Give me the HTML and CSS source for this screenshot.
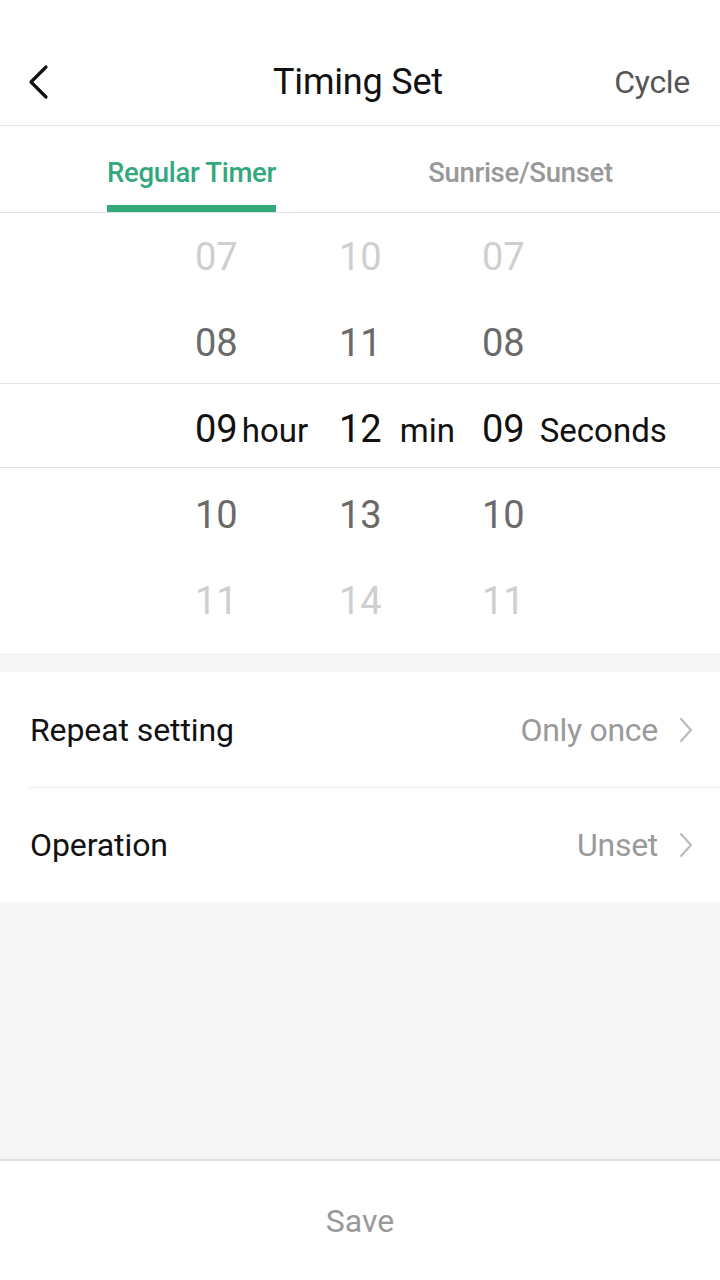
FILE: index.html
```html
<!DOCTYPE html>
<html>
<head>
<meta charset="utf-8">
<link rel="stylesheet" href="styles.css">
</head>
<body>
<div class="app">
  <header class="topbar">
    <div class="back">
      <svg width="24" height="36" viewBox="0 0 24 36"><path d="M20 3 L5 18 L20 33" fill="none" stroke="#111" stroke-width="3.2" stroke-linecap="round" stroke-linejoin="round"/></svg>
    </div>
    <h1 class="title">Timing Set</h1>
    <div class="cycle">Cycle</div>
  </header>
  <nav class="tabs">
    <div class="tab active"><span>Regular Timer</span></div>
    <div class="tab"><span>Sunrise/Sunset</span></div>
  </nav>
  <section class="picker">
    <div class="row far"><span class="c1">07</span><span class="c2">10</span><span class="c3">07</span></div>
    <div class="row near"><span class="c1">08</span><span class="c2">11</span><span class="c3">08</span></div>
    <div class="row sel">
      <span class="c1">09<em class="unit u1">hour</em></span>
      <span class="c2">12<em class="unit u2">min</em></span>
      <span class="c3">09<em class="unit u3">Seconds</em></span>
    </div>
    <div class="row near"><span class="c1">10</span><span class="c2">13</span><span class="c3">10</span></div>
    <div class="row far"><span class="c1">11</span><span class="c2">14</span><span class="c3">11</span></div>
  </section>
  <section class="list">
    <div class="item">
      <span class="label">Repeat setting</span>
      <span class="value">Only once</span>
      <svg class="chev" width="16" height="28" viewBox="0 0 16 28"><path d="M3 3 L13 14 L3 25" fill="none" stroke="#bbb" stroke-width="2.2" stroke-linecap="round" stroke-linejoin="round"/></svg>
    </div>
    <div class="item">
      <span class="label">Operation</span>
      <span class="value">Unset</span>
      <svg class="chev" width="16" height="28" viewBox="0 0 16 28"><path d="M3 3 L13 14 L3 25" fill="none" stroke="#bbb" stroke-width="2.2" stroke-linecap="round" stroke-linejoin="round"/></svg>
    </div>
  </section>
  <div class="spacer"></div>
  <footer class="save">Save</footer>
</div>
</body>
</html>
```
FILE: styles.css
```css
* { box-sizing: border-box; margin: 0; padding: 0; }
html, body { width: 720px; height: 1280px; }
body { font-family: Roboto, "Noto Sans", sans-serif; background: #fff; color: #111; }
.app { display: flex; flex-direction: column; height: 1280px; background: #f6f6f6; }

.topbar {
  height: 126px; background: #fff; border-bottom: 1px solid #e2e2e2;
  display: grid; grid-template-columns: 1fr auto 1fr; align-items: center;
  padding: 38px 30px 0 26px;
}
.back { width: 24px; height: 36px; display: flex; }
.title {
  text-align: center; font-size: 36px; font-weight: 400; color: #111;
  letter-spacing: -0.2px;
}
.cycle { justify-self: end; font-size: 32px; color: #555; letter-spacing: -0.3px; }

.tabs {
  height: 87px; background: #fff; border-bottom: 1px solid #e2e2e2;
  display: flex; padding: 0 35px 0 27px;
}
.tab {
  flex: 1; display: flex; justify-content: center;
}
.tab span {
  display: flex; align-items: center; height: 100%;
  font-size: 27.5px; font-weight: 500; color: #999; letter-spacing: -0.3px;
  border-bottom: 7px solid transparent; padding-top: 14px;
}
.tab.active span { color: #33a87b; border-bottom-color: #33a87b; }

.picker {
  height: 440px; background: #fff; display: flex; flex-direction: column;
}
.row {
  height: 86px; flex: none; display: grid; grid-template-columns: 195px 144px 143px 1fr;
  align-items: center; font-size: 38px; line-height: 1; padding-top: 2px;
}
.row span { display: flex; align-items: baseline; white-space: nowrap; }
.row .c1 { grid-column: 2; }
.row .c2 { grid-column: 3; }
.row .c3 { grid-column: 4; }
.row.far { color: #cfcfcf; }
.row.near { color: #6a6a6a; }
.row.sel {
  color: #111; border-top: 1px solid #e4e4e4; border-bottom: 1px solid #e4e4e4;
  height: 85px; margin: -2px 0 3px; padding-top: 6px;
}
.unit { font-style: normal; font-size: 33px; color: #111; }
.u1 { margin-left: 4px; }
.u2 { margin-left: 18px; }
.u3 { margin-left: 15px; }

.list { background: #fff; margin-top: 19px; }
.item {
  height: 115px; display: flex; align-items: center; padding: 0 26px 0 30px;
  font-size: 32px;
}
.item + .item { border-top: 1px solid #ececec; margin-left: 29px; padding-left: 1px; }
.label { flex: 1; color: #111; letter-spacing: -0.1px; }
.value { color: #9a9a9a; margin-right: 20px; letter-spacing: -0.3px; }
.chev { display: block; }

.spacer { flex: 1; }
.save {
  height: 121px; background: #fff; border-top: 2px solid #e0e0e0;
  display: flex; align-items: center; justify-content: center;
  font-size: 32px; color: #999;
}
```
